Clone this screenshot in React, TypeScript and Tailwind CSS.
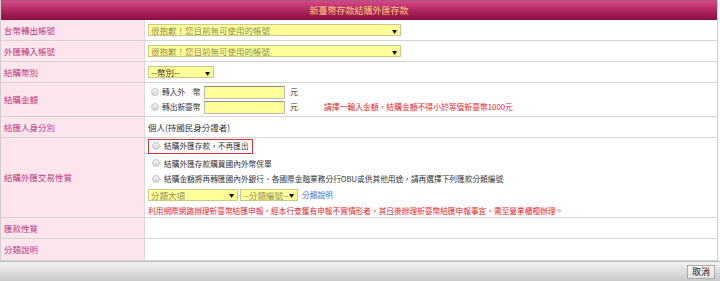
import React from "react";

const font = { fontFamily: '"Noto Sans CJK TC", "Liberation Sans", sans-serif' };

function FakeSelect({ text, width, muted }: { text: string; width: string; muted?: boolean }) {
  return (
    <div
      className={`${width} h-[12px] shrink-0 flex items-center justify-between bg-[#ffff99] border border-[#c9c98a] pl-[2px] pr-[3px] text-[8.5px] leading-none whitespace-nowrap ${
        muted ? "text-[#8f8f5a]" : "text-[#333]"
      }`}
    >
      <span>{text}</span>
      <span className="text-[5px] text-black">▼</span>
    </div>
  );
}

function Radio() {
  return (
    <span className="inline-block w-[8px] h-[8px] rounded-full border border-[#c4c4c4] bg-gradient-to-b from-[#f4f4f4] to-[#d6d6d6] shrink-0" />
  );
}

function Row({ label, h, children }: { label: string; h: string; children?: React.ReactNode }) {
  return (
    <div className={`flex ${h} border-b border-[#d4d4d4]`}>
      <div className="w-[144px] shrink-0 bg-[#fde5ee] border-r border-[#e6d3db] flex items-center pl-[3px] text-[8.5px] text-[#b8387a] whitespace-nowrap">
        {label}
      </div>
      <div className="flex-1 bg-white pl-[3px] flex flex-col justify-center text-[8.5px] text-[#333] whitespace-nowrap">
        {children}
      </div>
    </div>
  );
}

function AmountLine({ label, note }: { label: string; note?: string }) {
  return (
    <div className="flex items-center">
      <span className="pl-[3px] flex items-center gap-[3px] w-[56px] shrink-0 text-[7.7px]">
        <Radio />
        <span>{label}</span>
      </span>
      <span className="w-[81px] h-[13px] shrink-0 bg-[#ffff99] border border-[#b9b9b9] border-t-[#8d8d8d]" />
      <span className="ml-[5px] text-[8px]">元</span>
      {note && <span className="ml-[26px] text-[7.8px] text-[#e3262f]">{note}</span>}
    </div>
  );
}

export default function App() {
  return (
    <div className="w-[720px] h-[281px] bg-white overflow-hidden" style={font}>
      <div className="w-[718px] border-l border-r border-[#cfcfcf]">
        <div className="h-[20px] border-t border-[#a85a7c] bg-gradient-to-b from-[#d7478a] via-[#b12762] to-[#8b0c42] flex items-center justify-center text-[9px] text-[#ffcf7a]">
          新臺幣存款結購外匯存款
        </div>

        <Row label="台幣轉出帳號" h="h-[21px]">
          <FakeSelect text="很抱歉！您目前無可使用的帳號" width="w-[253px]" muted />
        </Row>
        <Row label="外匯轉入帳號" h="h-[21px]">
          <FakeSelect text="很抱歉！您目前無可使用的帳號" width="w-[253px]" muted />
        </Row>
        <Row label="結購幣別" h="h-[21px]">
          <FakeSelect text="--幣別--" width="w-[66px]" />
        </Row>
        <Row label="結購金額" h="h-[34px]">
          <div className="flex flex-col gap-[2px]">
            <AmountLine label="轉入外　幣" />
            <AmountLine label="轉出新臺幣" note="請擇一輸入金額，結購金額不得小於等值新臺幣1000元" />
          </div>
        </Row>
        <Row label="結匯人身分別" h="h-[21px]">
          <span>個人(持國民身分證者)</span>
        </Row>
        <Row label="結購外匯交易性質" h="h-[80px]">
          <div className="flex flex-col gap-[4px] text-[7.7px]">
            <div className="self-start h-[15px] border-[1.5px] border-[#d6333b] flex items-center pl-[3px] pr-[3px] gap-[4px]">
              <Radio />
              <span>結購外匯存款，不再匯出</span>
            </div>
            <div className="flex items-center pl-[4px] gap-[4px]">
              <Radio />
              <span>結購外匯存款購買國內外幣保單</span>
            </div>
            <div className="flex items-center pl-[4px] gap-[4px]">
              <Radio />
              <span>結購金額將再轉匯國內外銀行、各國際金融業務分行OBU或供其他用途，請再選擇下列匯款分類編號</span>
            </div>
            <div className="flex items-center gap-[2px]">
              <FakeSelect text="分類大項" width="w-[90px]" muted />
              <FakeSelect text="--分類編號--" width="w-[58px]" muted />
              <span className="ml-[2px] text-[#3b6fd1]">分類說明</span>
            </div>
            <span className="text-[7.7px] text-[#e3262f]">
              利用網際網路辦理新臺幣結匯申報，經本行查獲有申報不實情形者，其日後辦理新臺幣結匯申報事宜，需至營業櫃檯辦理。
            </span>
          </div>
        </Row>
        <Row label="匯款性質" h="h-[21px]" />
        <Row label="分類說明" h="h-[22px]" />
      </div>
      <div className="h-[20px] bg-gradient-to-b from-[#f2f2f2] to-[#c9c9c9] border-t border-[#bdbdbd] flex items-center justify-end pr-[5px]">
        <div className="h-[14px] px-[4px] flex items-center bg-gradient-to-b from-[#fafafa] to-[#e2e2e2] border border-[#a9a9a9] text-[9px] text-[#222]">
          取消
        </div>
      </div>
    </div>
  );
}
